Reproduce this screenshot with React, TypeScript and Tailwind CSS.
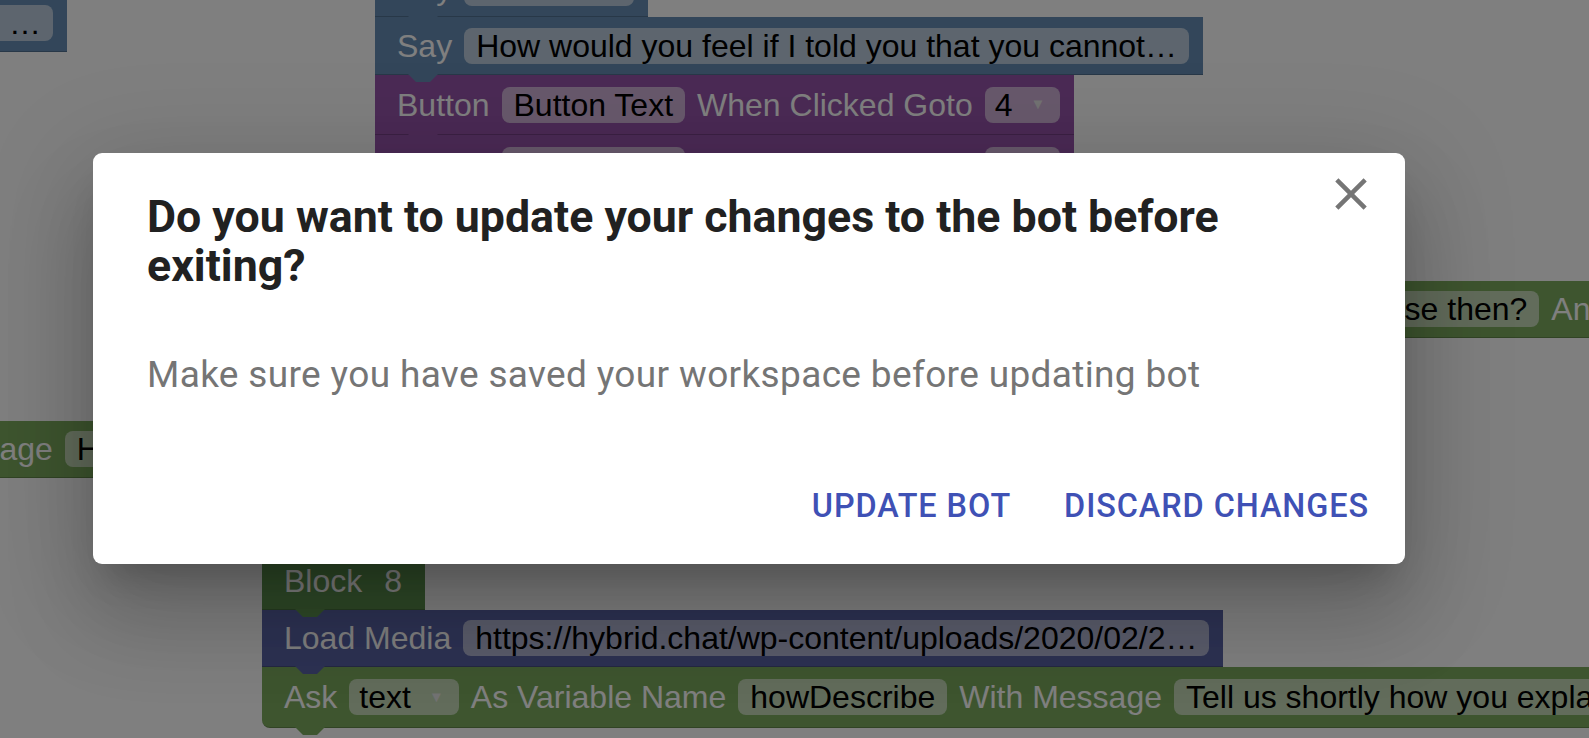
import React from 'react';

// blockly-ish colours (the backdrop halves them)
const KINDS = {
  say: { bg: 'bg-[#668cb4]', fill: '#668cb4' },
  button: { bg: 'bg-[#9654aa]', fill: '#9654aa' },
  green: { bg: 'bg-[#7cab5e]', fill: '#7cab5e' },
  hat: { bg: 'bg-[#5e9450]', fill: '#5e9450' },
  media: { bg: 'bg-[#5a64a6]', fill: '#5a64a6' },
};

type Kind = keyof typeof KINDS;

interface BlockProps {
  kind: Kind;
  tab?: boolean;
  h?: string;
  className?: string;
  children: React.ReactNode;
}

const Block: React.FC<BlockProps> = ({ kind, tab, h = 'h-[58px]', className = '', children }) => {
  const c = KINDS[kind];
  return (
    <div
      className={`relative flex w-fit shrink-0 items-center gap-[12px] whitespace-nowrap border-b border-black/20 pl-[22px] pr-[14px] ${h} ${c.bg} ${className}`}
    >
      {children}
      {tab && (
        <svg className="absolute left-[33px] top-full z-10" width="30" height="8" viewBox="0 0 30 8">
          <path d="M0 0 L8 8 L22 8 L30 0 Z" fill={c.fill} />
        </svg>
      )}
    </div>
  );
};

const Label = ({ children }: { children: React.ReactNode }) => (
  <span className="text-white">{children}</span>
);

const Field = ({ children, className = '' }: { children: React.ReactNode; className?: string }) => (
  <span className={`flex h-[36px] items-center rounded-[8px] bg-white/55 px-[12px] text-black ${className}`}>
    {children}
  </span>
);

const Dropdown = ({ value }: { value: string }) => (
  <span className="flex h-[36px] items-center gap-[18px] rounded-[8px] bg-white/55 pl-[10px] pr-[15px] text-black">
    {value}
    <span className="text-[15px] text-[#e4e4e4]">▼</span>
  </span>
);

const CloseIcon = () => (
  <svg width="54" height="54" viewBox="0 0 24 24">
    <path
      d="M19 6.41 17.59 5 12 10.59 6.41 5 5 6.41 10.59 12 5 17.59 6.41 19 12 13.41 17.59 19 19 17.59 13.41 12z"
      fill="#757575"
    />
  </svg>
);

export default function App() {
  return (
    <div className="relative h-[738px] w-[1589px] overflow-hidden bg-white font-['Liberation_Sans',Arial,sans-serif] text-[32px]">
      {/* workspace */}
      <div className="absolute right-[1522px] top-[-6px]">
        <Block kind="say">
          <Label>Say</Label>
          <Field>Good to hear that! Tell me more about why you could …</Field>
        </Block>
      </div>

      <div className="absolute left-[375px] top-[-41px] flex flex-col">
        <Block kind="say" tab>
          <Label>Say</Label>
          <Field className="w-[170px]">Hello there!</Field>
        </Block>
        <Block kind="say" tab>
          <Label>Say</Label>
          <Field>How would you feel if I told you that you cannot…</Field>
        </Block>
        <Block kind="button" tab h="h-[60px]">
          <Label>Button</Label>
          <Field>Button Text</Field>
          <Label>When Clicked Goto</Label>
          <Dropdown value="4" />
        </Block>
        <Block kind="button" h="h-[60px]">
          <Label>Button</Label>
          <Field>Button Text</Field>
          <Label>When Clicked Goto</Label>
          <Dropdown value="5" />
        </Block>
      </div>

      <div className="absolute left-[1200px] top-[281px]">
        <Block kind="green" h="h-[57px]">
          <Label>Ask</Label>
          <Field className="w-[252px] justify-end">that case then?</Field>
          <Label>And Save As</Label>
        </Block>
      </div>

      <div className="absolute left-[-99px] top-[421px]">
        <Block kind="green" h="h-[57px]">
          <Label>Message</Label>
          <Field>Hi! How are you doing today?</Field>
        </Block>
      </div>

      <div className="absolute left-[262px] top-[552px] flex flex-col">
        <Block kind="hat" tab className="pr-[23px]">
          <Label>Block</Label>
          <span className="ml-[10px] text-white">8</span>
        </Block>
        <Block kind="media" tab h="h-[57px]">
          <Label>Load Media</Label>
          <Field>https://hybrid.chat/wp-content/uploads/2020/02/2…</Field>
        </Block>
        <Block kind="green" tab h="h-[61px]" className="rounded-bl-[8px]">
          <Label>Ask</Label>
          <Dropdown value="text" />
          <Label>As Variable Name</Label>
          <Field>howDescribe</Field>
          <Label>With Message</Label>
          <Field>Tell us shortly how you explain it to your friends</Field>
        </Block>
      </div>

      {/* backdrop + dialog */}
      <div className="absolute inset-0 z-20 flex items-start bg-black/50 pl-[93px] pt-[153px]">
        <div className="relative flex h-[411px] w-[1312px] flex-col rounded-[9px] bg-white font-['Roboto',sans-serif] shadow-[0_25px_34px_-16px_rgba(0,0,0,0.2),0_54px_86px_7px_rgba(0,0,0,0.14),0_20px_104px_18px_rgba(0,0,0,0.12)]">
          <div className="px-[54px] pt-[40px]">
            <h2 className="text-[44.7px] font-bold leading-[49px] text-[#212121]">
              Do you want to update your changes to the bot before exiting?
            </h2>
          </div>
          <button className="absolute right-[27px] top-[14px]">
            <CloseIcon />
          </button>

          <p className="mt-[57px] px-[54px] text-[37px] leading-[54px] tracking-[0.35px] text-[#757575]">
            Make sure you have saved your workspace before updating bot
          </p>

          <div className="mt-auto flex justify-end gap-[17px] px-[18px] pb-[17px]">
            <button className="px-[18px] py-[13.5px] text-[32.4px] font-medium uppercase leading-[55px] tracking-[0.93px] text-[#3f51b5]">
              Update Bot
            </button>
            <button className="px-[18px] py-[13.5px] text-[32.4px] font-medium uppercase leading-[55px] tracking-[0.93px] text-[#3f51b5]">
              Discard Changes
            </button>
          </div>
        </div>
      </div>
    </div>
  );
}
